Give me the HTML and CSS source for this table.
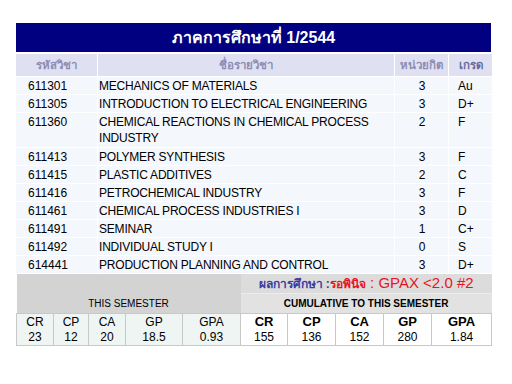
FILE: index.html
```html
<!DOCTYPE html>
<html lang="th">
<head>
<meta charset="utf-8">
<title>ภาคการศึกษาที่ 1/2544</title>
<link rel="stylesheet" href="styles.css">
</head>
<body>
<div class="wrap">
  <div class="title">ภาคการศึกษาที่ 1/2544</div>
  <table class="courses">
    <colgroup>
      <col class="c-code"><col class="c-name"><col class="c-cr"><col class="c-gr">
    </colgroup>
    <thead>
      <tr><th>รหัสวิชา</th><th>ชื่อรายวิชา</th><th>หน่วยกิต</th><th class="hg">เกรด</th></tr>
    </thead>
    <tbody>
      <tr><td class="code">611301</td><td class="name">MECHANICS OF MATERIALS</td><td class="num">3</td><td class="grade">Au</td></tr>
      <tr><td class="code">611305</td><td class="name">INTRODUCTION TO ELECTRICAL ENGINEERING</td><td class="num">3</td><td class="grade">D+</td></tr>
      <tr class="tall"><td class="code">611360</td><td class="name">CHEMICAL REACTIONS IN CHEMICAL PROCESS INDUSTRY</td><td class="num">2</td><td class="grade">F</td></tr>
      <tr><td class="code">611413</td><td class="name">POLYMER SYNTHESIS</td><td class="num">3</td><td class="grade">F</td></tr>
      <tr><td class="code">611415</td><td class="name">PLASTIC ADDITIVES</td><td class="num">2</td><td class="grade">C</td></tr>
      <tr><td class="code">611416</td><td class="name">PETROCHEMICAL INDUSTRY</td><td class="num">3</td><td class="grade">F</td></tr>
      <tr><td class="code">611461</td><td class="name">CHEMICAL PROCESS INDUSTRIES I</td><td class="num">3</td><td class="grade">D</td></tr>
      <tr><td class="code">611491</td><td class="name">SEMINAR</td><td class="num">1</td><td class="grade">C+</td></tr>
      <tr><td class="code">611492</td><td class="name">INDIVIDUAL STUDY I</td><td class="num">0</td><td class="grade">S</td></tr>
      <tr><td class="code">614441</td><td class="name">PRODUCTION PLANNING AND CONTROL</td><td class="num">3</td><td class="grade">D+</td></tr>
    </tbody>
  </table>
  <table class="summary">
    <colgroup>
      <col class="s1"><col class="s2"><col class="s3"><col class="s4"><col class="s5">
      <col class="t1"><col class="t2"><col class="t3"><col class="t4"><col class="t5">
    </colgroup>
    <tr>
      <td class="sem" colspan="5" rowspan="2">THIS SEMESTER</td>
      <td class="status" colspan="5"><span class="lbl">ผลการศึกษา :</span><span class="warn">รอพินิจ</span><span class="gpax"> : GPAX &lt;2.0 #2</span></td>
    </tr>
    <tr>
      <td class="cum" colspan="5">CUMULATIVE TO THIS SEMESTER</td>
    </tr>
    <tr class="vals">
      <td class="l">CR<br>23</td>
      <td class="l">CP<br>12</td>
      <td class="l">CA<br>20</td>
      <td class="l">GP<br>18.5</td>
      <td class="l">GPA<br>0.93</td>
      <td class="r"><b>CR</b><br>155</td>
      <td class="r"><b>CP</b><br>136</td>
      <td class="r"><b>CA</b><br>152</td>
      <td class="r"><b>GP</b><br>280</td>
      <td class="r"><b>GPA</b><br>1.84</td>
    </tr>
  </table>
</div>
</body>
</html>
```
FILE: styles.css
```css
html, body {
  margin: 0;
  padding: 0;
  background: #ffffff;
}
body {
  font-family: "Liberation Sans", Tahoma, sans-serif;
  font-size: 12px;
  color: #000;
}
.wrap {
  width: 475px;
  margin: 23px 0 0 16px;
}
.title {
  height: 29px;
  line-height: 29px;
  background: #000080;
  color: #fff;
  font-weight: bold;
  font-size: 16px;
  text-align: center;
}
.courses {
  border-collapse: separate;
  border-spacing: 1px;
  margin: 1px 0 0 -1px;
  table-layout: fixed;
  width: 477px;
}
.c-code { width: 81px; }
.c-name { width: 296px; }
.c-cr { width: 53px; }
.c-gr { width: 43px; }
.courses th {
  background: #dfe1f2;
  color: #8d8db5;
  font-size: 11.5px;
  font-weight: bold;
  height: 22px;
  padding: 0;
  text-align: center;
}
.courses th.hg { color: #6a6aa0; }
.courses td {
  background: #f4f7fc;
  padding: 1px 0 0 1px;
  line-height: 16px;
  vertical-align: top;
}
.courses td.name { letter-spacing: -0.2px; }
.courses tr.tall td { padding-bottom: 1px; }
.courses td.code { padding-left: 12px; }
.courses td.num { text-align: center; }
.courses td.grade { padding-left: 9px; }
.summary {
  width: 475px;
  border-collapse: collapse;
  table-layout: fixed;
  margin-top: 0;
}
.s1 { width: 37px; } .s2 { width: 35px; } .s3 { width: 37px; } .s4 { width: 57px; } .s5 { width: 58px; }
.t1 { width: 47px; } .t2 { width: 48px; } .t3 { width: 48px; } .t4 { width: 48px; } .t5 { width: 60px; }
.summary td { padding: 0; text-align: center; }
.sem {
  background: #d3d3d3;
  vertical-align: bottom;
  font-size: 10px;
  height: 35px;
  padding-bottom: 4px !important;
}
.status {
  background: #dcdcdc;
  height: 17px;
  border-bottom: 1px solid #ececec;
  font-weight: bold;
  white-space: nowrap;
}
.lbl { color: #3c3ca0; font-size: 12px; }
.warn { color: #e8141e; font-size: 12px; }
.gpax { color: #e8141e; font-size: 15px; font-weight: normal; }
.cum {
  background: #e2e2e2;
  font-weight: bold;
  font-size: 10px;
  height: 19px;
}
.vals td {
  border: 1px solid #c8c8c8;
  height: 30px;
  font-size: 12px;
  line-height: 15px;
}
.vals td.l { background: #eef5f2; }
.vals td.r { background: #ffffff; }
.vals td.r b { font-size: 13px; }
```
